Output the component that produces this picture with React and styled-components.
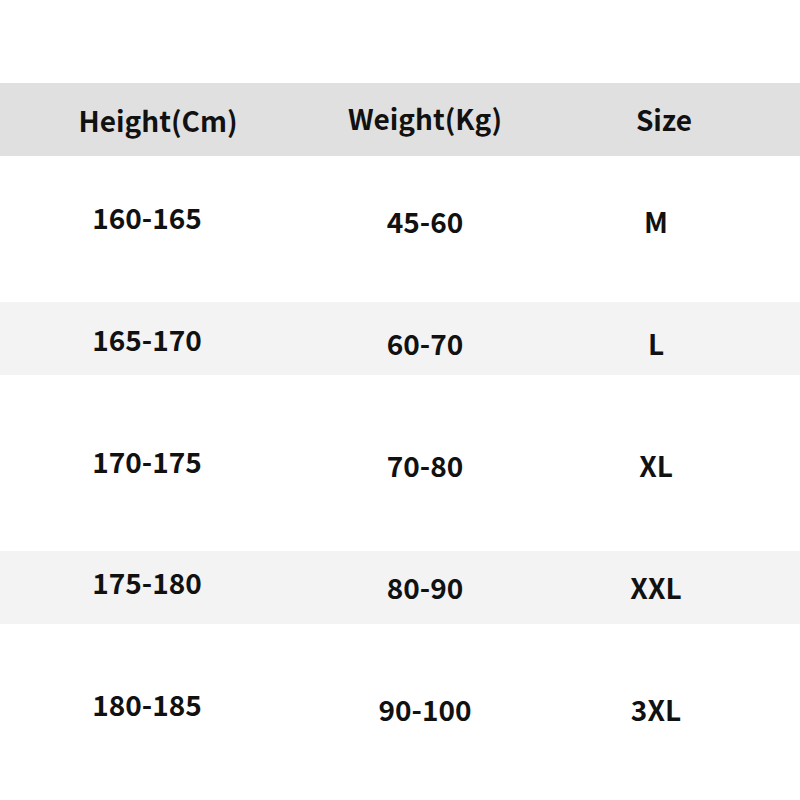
import styled, { createGlobalStyle } from 'styled-components'

const Global = createGlobalStyle`
    html, body {
        margin: 0;
        padding: 0;
        background: #fff;
    }
    body {
        font-family: "Noto Sans CJK SC", "Noto Sans", sans-serif;
    }
`

const Page = styled.div`
    width: 800px;
    height: 800px;
    padding-top: 83px;
    box-sizing: border-box;
    overflow: hidden;
`

const Row = styled.div`
    display: grid;
    grid-template-columns: 294px 262px 200px 1fr;
    height: ${p => p.$h}px;
    background: ${p => p.$bg || '#fff'};
`

const Cell = styled.div`
    box-sizing: border-box;
    display: flex;
    justify-content: center;
    align-items: flex-start;
    padding-top: ${p => p.$top}px;
    padding-left: ${p => p.$shift > 0 ? p.$shift * 2 : 0}px;
    font-size: 28px;
    line-height: 40px;
    font-weight: 700;
    color: #111;
    white-space: nowrap;
`

const header = ['Height(Cm)', 'Weight(Kg)', 'Size']

const rows = [
    { h: 146, top: [41, 45, 45], cells: ['160-165', '45-60', 'M'] },
    { h: 73, top: [17, 21, 21], bg: '#f3f3f3', cells: ['165-170', '60-70', 'L'] },
    { h: 176, top: [66, 70, 70], cells: ['170-175', '70-80', 'XL'] },
    { h: 73, top: [11, 16, 16], bg: '#f3f3f3', cells: ['175-180', '80-90', 'XXL'] },
    { h: 176, top: [60, 65, 65], cells: ['180-185', '90-100', '3XL'] },
]

const App = function App() {
    return <Page>
        <Global />
        <Row $h={73} $bg="#e0e0e0">
            <Cell $top={17} $shift={11}>{header[0]}</Cell>
            <Cell $top={15} $shift={0}>{header[1]}</Cell>
            <Cell $top={16} $shift={8}>{header[2]}</Cell>
        </Row>
        {rows.map((r, i) => (
            <Row key={i} $h={r.h} $bg={r.bg}>
                {r.cells.map((c, j) => (
                    <Cell key={j} $top={r.top[j]}>{c}</Cell>
                ))}
            </Row>
        ))}
    </Page>
}

export default App
